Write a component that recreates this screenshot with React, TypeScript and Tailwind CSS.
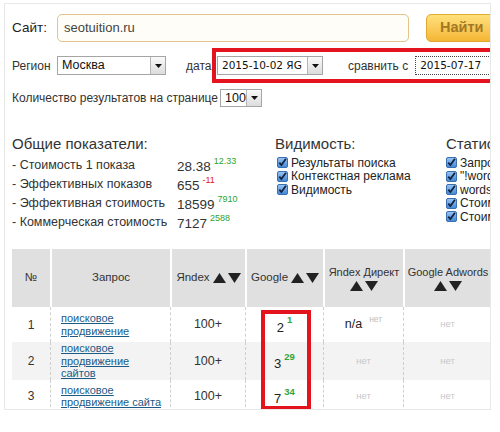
import React from "react";

const sans = { fontFamily: '"Liberation Sans", Arial, sans-serif' };
const verdana = { fontFamily: '"DejaVu Sans", Verdana, sans-serif' };

const Arrow = () => (
  <span className="flex h-full w-[15px] shrink-0 items-center justify-center border-l border-[#b5b5b5] bg-gradient-to-b from-[#fafafa] to-[#dcdcdc]">
    <svg width="7" height="4" viewBox="0 0 7 4">
      <path d="M0 0h7L3.5 4z" fill="#111" />
    </svg>
  </span>
);

const Select = ({ value, className, mono }: { value: string; className: string; mono?: boolean }) => (
  <div className={`flex shrink-0 items-center border border-[#a5a5a5] bg-white ${className}`}>
    <span
      className={`flex-1 overflow-hidden whitespace-nowrap pl-[4px] text-[#111] ${mono ? "text-[10.5px]" : "text-[12.5px]"}`}
      style={mono ? verdana : undefined}
    >
      {value}
    </span>
    <Arrow />
  </div>
);

const Check = ({ label }: { label: string }) => (
  <div className="flex h-[13.5px] items-center gap-[3px] text-[12px] leading-none text-[#222]">
    <svg width="11" height="11" viewBox="0 0 11 11" className="shrink-0">
      <defs>
        <linearGradient id="cb" x1="0" y1="0" x2="0" y2="1">
          <stop offset="0" stopColor="#9cc6f2" />
          <stop offset="1" stopColor="#3f86d8" />
        </linearGradient>
      </defs>
      <rect x="0.5" y="0.5" width="10" height="10" rx="1.5" fill="url(#cb)" stroke="#3a6fb0" />
      <path d="M2.3 5.6 4.4 8 8.9 1.8" fill="none" stroke="#14233f" strokeWidth="1.8" />
    </svg>
    <span className="whitespace-nowrap">{label}</span>
  </div>
);

const Up = () => (
  <svg width="13" height="10" viewBox="0 0 13 10" className="inline-block">
    <path d="M0 10 6.5 0 13 10z" fill="#222" />
  </svg>
);
const Down = () => (
  <svg width="13" height="10" viewBox="0 0 13 10" className="inline-block">
    <path d="M0 0h13L6.5 10z" fill="#222" />
  </svg>
);
const Sort = () => (
  <span className="inline-flex items-center gap-[2px]">
    <Up />
    <Down />
  </span>
);

const stats = [
  { label: "- Стоимость 1 показа", value: "28.38", diff: "12.33", up: true },
  { label: "- Эффективных показов", value: "655", diff: "-11", up: false },
  { label: "- Эффективная стоимость", value: "18599", diff: "7910", up: true },
  { label: "- Коммерческая стоимость", value: "7127", diff: "2588", up: true },
];

const rows = [
  { n: "1", q: ["поисковое", "продвижение"], g: "2", gd: "1", d: "n/a", h: "h-[35px]", bg: "bg-white" },
  { n: "2", q: ["поисковое", "продвижение", "сайтов"], g: "3", gd: "29", d: "", h: "h-[38px]", bg: "bg-[#f3f3f3]" },
  { n: "3", q: ["поисковое", "продвижение сайта"], g: "7", gd: "34", d: "", h: "h-[32px]", bg: "bg-white" },
];

const cols = "grid grid-cols-[38px_120px_75px_78px_80px_88px]";
const cell = "flex items-center justify-center border-l border-dashed border-[#cfcfcf]";
const head = "flex items-center justify-center border-l-2 border-white bg-[#e0e0e0]";

export default function App() {
  return (
    <div className="h-[432px] w-[500px] bg-white text-[#333]" style={sans}>
      <div className="ml-[4px] pt-[3px]">
        <div className="h-[407px] w-[487px] overflow-hidden border border-[#e8e8e8] pl-[7px]">
          {/* site row */}
          <div className="mt-[10px] flex h-[28px] items-center">
            <span className="w-[45px] shrink-0 text-[13.5px] text-[#222]">Сайт:</span>
            <div className="flex h-[28px] w-[352px] shrink-0 items-center rounded-[5px] border border-[#e2c48a] bg-[#fffdf8] pl-[6px] text-[13px] text-[#444]">
              seotuition.ru
            </div>
            <div className="ml-[17px] flex h-[28px] w-[80px] shrink-0 items-center rounded-[5px] border border-[#e0a930] bg-gradient-to-b from-[#ffe07a] to-[#f5b632] pl-[13px] text-[14.5px] font-bold text-[#a27822]">
              Найти
            </div>
          </div>

          {/* region row */}
          <div className="mt-[6px] flex h-[35px] items-center whitespace-nowrap text-[12px] text-[#333]">
            <span className="w-[45px] shrink-0">Регион</span>
            <Select value="Москва" className="h-[19px] w-[109px]" />
            <span className="ml-[20px] w-[26px] shrink-0">дата</span>
            <div className="flex h-[35px] w-[300px] shrink-0 items-center border-4 border-[#e3141d] pl-[1px]">
              <Select value="2015-10-02  ЯG" className="h-[19px] w-[106px]" mono />
              <span className="ml-[25px] shrink-0">сравнить с</span>
              <div
                className="ml-[7px] flex h-[19px] w-[100px] shrink-0 items-center border border-dotted border-[#444] pl-[4px] text-[10.5px] text-[#111]"
                style={verdana}
              >
                2015-07-17
              </div>
            </div>
          </div>

          {/* per page */}
          <div className="mt-[6px] flex h-[18px] items-center whitespace-nowrap text-[12px]">
            <span className="w-[208px] shrink-0">Количество результатов на странице</span>
            <Select value="100" className="h-[18px] w-[42px]" />
          </div>

          {/* stats */}
          <div className="mt-[28px] flex">
            <div className="w-[263px] shrink-0">
              <div className="mb-[3px] text-[15px] leading-[18px]">Общие показатели:</div>
              {stats.map((s) => (
                <div key={s.label} className="flex h-[19px] items-center whitespace-nowrap text-[12.5px]">
                  <span className="w-[165px] shrink-0">{s.label}</span>
                  <span className="pt-[3px] text-[13.5px]">{s.value}</span>
                  <span
                    className={`relative -top-[4px] ml-[3px] text-[9px] ${s.up ? "text-[#2ea32e]" : "text-[#e02020]"}`}
                  >
                    {s.diff}
                  </span>
                </div>
              ))}
            </div>
            <div className="w-[171px] shrink-0">
              <div className="mb-[3px] text-[15px] leading-[18px]">Видимость:</div>
              <div className="pl-[2px]">
                <Check label="Результаты поиска" />
                <Check label="Контекстная реклама" />
                <Check label="Видимость" />
              </div>
            </div>
            <div className="w-[60px] shrink-0">
              <div className="mb-[3px] whitespace-nowrap text-[15px] leading-[18px]">Статистика</div>
              <Check label="Запросы" />
              <Check label={'"!word"'} />
              <Check label="wordstat" />
              <Check label="Стоимость" />
              <Check label="Стоимость" />
            </div>
          </div>

          {/* table */}
          <div className="relative mt-[17px] w-[479px]">
            <div className={`${cols} h-[58px] whitespace-nowrap text-[11.5px] text-[#333]`}>
              <div className="flex items-center justify-center bg-[#e0e0e0]">№</div>
              <div className={head}>Запрос</div>
              <div className={`${head} gap-[3px]`}>
                Яndex <Sort />
              </div>
              <div className={`${head} gap-[3px]`}>
                Google <Sort />
              </div>
              <div className={`${head} flex-col gap-[2px] text-[11px] leading-[13px]`}>
                <span>Яndex Директ</span>
                <Sort />
              </div>
              <div className={`${head} flex-col gap-[2px] text-[11px] leading-[13px]`}>
                <span>Google Adwords</span>
                <Sort />
              </div>
            </div>
            {rows.map((r) => (
              <div key={r.n} className={`${cols} ${r.h} ${r.bg} text-[12px]`}>
                <div className="flex items-center justify-center">{r.n}</div>
                <div className={`${cell} !justify-start pl-[10px]`}>
                  <div className="flex flex-col text-[11px] leading-[12.5px] text-[#1d5b87] underline">
                    {r.q.map((l) => (
                      <span key={l} className="whitespace-nowrap">
                        {l}
                      </span>
                    ))}
                  </div>
                </div>
                <div className={`${cell} text-[12.5px]`}>100+</div>
                <div className={`${cell} text-[13px] text-[#222]`}>
                  <span className="relative top-[3px]">{r.g}</span>
                  <span className="relative -top-[4px] ml-[3px] text-[9.5px] font-bold text-[#36a336]">{r.gd}</span>
                </div>
                <div className={cell}>
                  {r.d ? (
                    <>
                      <span className="text-[12.5px] text-[#222]">n/a</span>
                      <span className="relative -top-[5px] ml-[7px] text-[8.5px] text-[#bdbdbd]">нет</span>
                    </>
                  ) : (
                    <span className="text-[9.5px] text-[#c8c8c8]">нет</span>
                  )}
                </div>
                <div className={cell}>
                  <span className="text-[9.5px] text-[#c8c8c8]">нет</span>
                </div>
              </div>
            ))}
            {/* highlight over Google column */}
            <div className="absolute left-[249px] top-[61px] h-[100px] w-[50px] border-4 border-[#e3141d]" />
          </div>
        </div>
      </div>
    </div>
  );
}
